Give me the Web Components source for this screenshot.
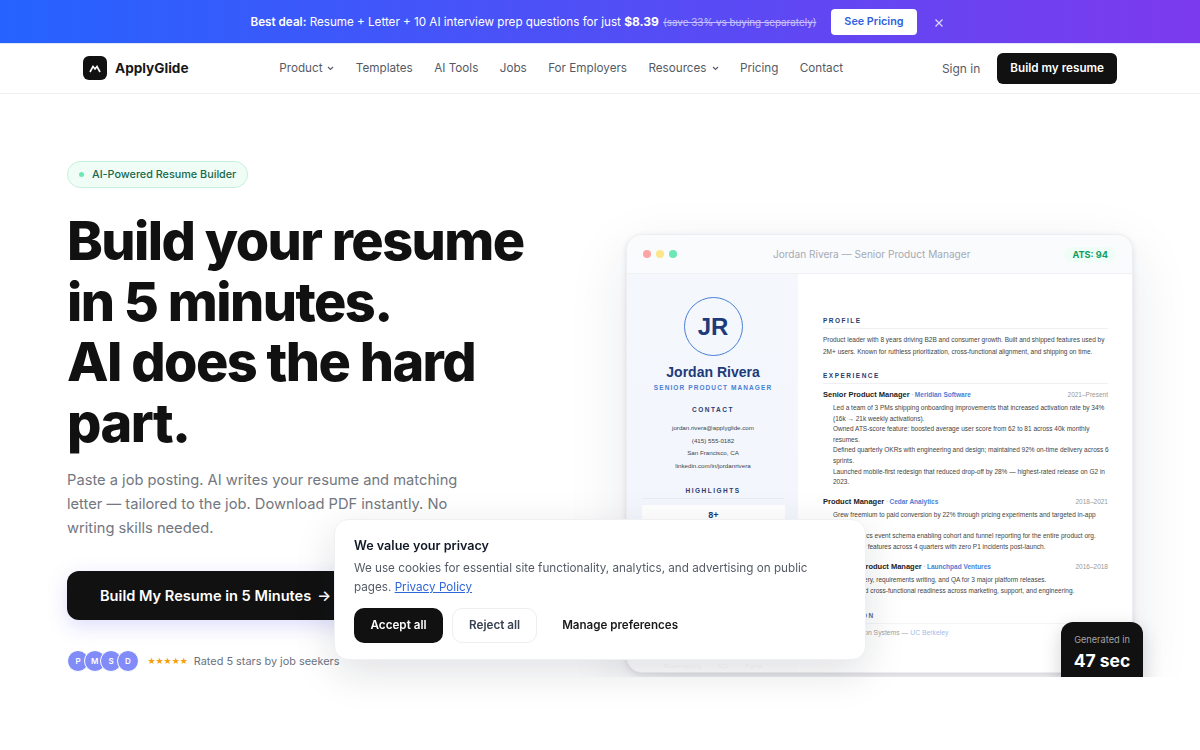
<!DOCTYPE html>
<html lang="en">
<head>
<meta charset="utf-8">
<title>ApplyGlide</title>
<style>
    html, body {
        margin: 0;
        background: #fff;
        font-family: Inter, "Liberation Sans", sans-serif;
        color: #111;
    }
</style>
</head>
<body>
<deal-banner></deal-banner>
<site-nav></site-nav>
<hero-section>
    <resume-card slot="preview"></resume-card>
</hero-section>
<cookie-box></cookie-box>

<script>
(function (){
    const define = (name, html) => {
        customElements.define(name, class extends HTMLElement {
            constructor() {
                super();
                this.attachShadow({ mode: "open" });
                this.shadowRoot.innerHTML = html;
            }
        });
    };

    define("deal-banner", `
    <style>
        :host {
            display: flex;
            align-items: center;
            justify-content: center;
            height: 44px;
            box-sizing: border-box;
            padding-right: 6px;
            background: linear-gradient(90deg, #2563ff 0%, #7c3aed 100%);
            background-clip: padding-box;
            color: #fff;
            font-size: 11.65px;
            border-bottom: 1px solid #dfe6f5;
        }
        b { font-weight: 600; font-size: 11.7px; }
        .price { font-size: 12px; font-weight: 700; }
        s { margin-left: 1px; font-size: 9.9px; opacity: .65; }
        a {
            display: block;
            margin-left: 15px;
            padding: 0 13px;
            line-height: 26px;
            background: #fff;
            border-radius: 4px;
            color: #2f5fe0;
            font-size: 10.8px;
            font-weight: 600;
        }
        svg { margin-left: 17px; margin-top: 2px; }
    </style>
    <span><b>Best deal:</b> Resume + Letter + 10 AI interview prep questions for just <span class="price">$8.39</span> <s>(save 33% vs buying separately)</s></span>
    <a>See Pricing</a>
    <svg width="10" height="10" viewBox="0 0 10 10" fill="none" stroke="#dcdcfa" stroke-width="1.2"><path d="M1.5 1.5l7 7M8.5 1.5l-7 7"/></svg>
    `);

    define("nav-link", `
    <style>
        :host {
            display: inline-flex;
            align-items: center;
            gap: 5px;
            color: #555b66;
            font-size: 11.7px;
        }
        ::slotted(svg) { margin-top: 1px; }
    </style>
    <slot></slot>
    `);

    const chevron = `<svg width="7" height="5" viewBox="0 0 7 5" fill="none" stroke="#555b66" stroke-width="1.1"><path d="M1 1l2.5 2.5L6 1"/></svg>`;

    define("site-nav", `
    <style>
        :host {
            display: flex;
            align-items: center;
            justify-content: space-between;
            height: 50px;
            box-sizing: border-box;
            padding: 0 83px 1px;
            background: #fff;
            border-bottom: 1px solid #f0f0f2;
        }
        .logo {
            display: flex;
            align-items: center;
            gap: 8px;
            font-size: 13.6px;
            font-weight: 700;
            color: #16171a;
        }
        .mark {
            display: flex;
            align-items: center;
            justify-content: center;
            width: 24px;
            height: 24px;
            background: #111;
            border-radius: 6px;
        }
        .links { display: flex; gap: 21.4px; margin: 0 7px 0 -1px; }
        .actions { display: flex; align-items: center; gap: 17px; }
        .sign { color: #555b66; font-size: 12px; }
        .cta {
            padding: 0 13px;
            line-height: 31px;
            background: #111;
            border-radius: 6px;
            color: #fff;
            font-size: 11.7px;
            font-weight: 600;
        }
    </style>
    <div class="logo">
        <span class="mark"><svg width="12" height="9" viewBox="0 0 12 9" fill="none" stroke="#fff" stroke-width="1.6"><path d="M1 8l3-5.5L6 5l2-2.5L11 8"/></svg></span>
        ApplyGlide
    </div>
    <div class="links">
        <nav-link>Product ${chevron}</nav-link>
        <nav-link>Templates</nav-link>
        <nav-link>AI Tools</nav-link>
        <nav-link>Jobs</nav-link>
        <nav-link>For Employers</nav-link>
        <nav-link>Resources ${chevron}</nav-link>
        <nav-link>Pricing</nav-link>
        <nav-link>Contact</nav-link>
    </div>
    <div class="actions">
        <span class="sign">Sign in</span>
        <span class="cta">Build my resume</span>
    </div>
    `);

    define("hero-section", `
    <style>
        :host {
            display: flex;
            justify-content: space-between;
            height: 583px;
            padding: 0 67px;
            overflow: hidden;
            background: #fff;
        }
        .copy { width: 480px; padding-top: 67px; }
        .pill {
            display: inline-flex;
            align-items: center;
            gap: 8px;
            height: 25px;
            padding: 0 11px;
            background: #f0fdf7;
            border: 1px solid #c6f0dc;
            border-radius: 14px;
            color: #17694c;
            font-size: 10.8px;
            font-weight: 500;
        }
        .dot { width: 5px; height: 5px; border-radius: 50%; background: #6ee7b7; }
        h1 {
            margin: 23px 0 0;
            font-size: 54px;
            line-height: 60.5px;
            font-weight: 800;
            letter-spacing: -1.55px;
            color: #111;
        }
        p {
            width: 400px;
            margin: 15px 0 0;
            color: #737780;
            font-size: 14.7px;
            line-height: 24px;
        }
        .go {
            display: inline-flex;
            align-items: center;
            gap: 6px;
            height: 49px;
            margin-top: 31px;
            padding: 0 33px;
            background: #111;
            border-radius: 12px;
            color: #fff;
            font-size: 14.6px;
            font-weight: 600;
            box-shadow: 0 6px 20px rgba(99, 102, 241, .22);
        }
        .proof {
            display: flex;
            align-items: center;
            margin-top: 30px;
            color: #6b7280;
            font-size: 10.9px;
        }
        .av {
            display: flex;
            align-items: center;
            justify-content: center;
            width: 20px;
            height: 20px;
            margin-right: -5.4px;
            background: #818cf8;
            border-radius: 50%;
            color: #fff;
            font-size: 8px;
            font-weight: 600;
            border: 1px solid #fff;
        }
        .stars { margin: 0 6px 0 14px; color: #f59e0b; font-size: 9px; font-family: "DejaVu Sans", sans-serif; }
        .preview { padding-top: 140px; position: relative; }
    </style>
    <div class="copy">
        <div class="pill"><span class="dot"></span>AI-Powered Resume Builder</div>
        <h1>Build your resume in 5 minutes.<br>AI does the hard part.</h1>
        <p>Paste a job posting. AI writes your resume and matching letter — tailored to the job. Download PDF instantly. No writing skills needed.</p>
        <div class="go">Build My Resume in 5 Minutes <span>→</span></div>
        <div class="proof">
            <span class="av">P</span><span class="av">M</span><span class="av">S</span><span class="av">D</span>
            <span class="stars">★★★★★</span>
            Rated 5 stars by job seekers
        </div>
    </div>
    <div class="preview"><slot name="preview"></slot></div>
    `);

    define("resume-section", `
    <style>
        :host { display: block; margin-top: 14px; }
        h4 {
            margin: 0 0 5px;
            padding-bottom: 3px;
            border-bottom: 1px solid #eef0f4;
            color: #2b3c72;
            font: 700 6.5px/9px "Liberation Sans", sans-serif;
            letter-spacing: 1.5px;
        }
    </style>
    <h4><slot name="title"></slot></h4>
    <slot></slot>
    `);

    define("resume-job", `
    <style>
        :host { display: block; margin-bottom: 8.5px; }
        .row { display: flex; align-items: baseline; font-size: 7.5px; line-height: 11px; }
        b { color: #222; }
        .co { color: #4a80d4; font-size: 6.5px; font-weight: 700; }
        .sep { color: #888; font-size: 6.5px; margin: 0 1.5px; }
        .when { margin-left: auto; color: #999; font-size: 6.5px; }
        .list { margin: 3px -2px 0 0; padding-left: 10px; color: #444; font-size: 6.5px; line-height: 10.6px; }
        ::slotted(div) { display: block; }
    </style>
    <div class="row"><b><slot name="role"></slot></b><span class="sep">·</span><span class="co"><slot name="company"></slot></span><span class="when"><slot name="when"></slot></span></div>
    <div class="list"><slot></slot></div>
    `);

    define("resume-card", `
    <style>
        :host {
            display: block;
            position: relative;
            width: 507px;
            font-family: "Liberation Sans", sans-serif;
        }
        .frame {
            height: 439px;
            overflow: hidden;
            position: relative;
            background: #fff;
            border: 1px solid #eceef2;
            border-radius: 16px;
            box-sizing: border-box;
            box-shadow: 0 2px 6px rgba(0, 0, 0, .1), 0 20px 60px rgba(30, 40, 90, .1);
        }
        .bar {
            display: flex;
            align-items: center;
            height: 39px;
            padding: 0 16px;
            box-sizing: border-box;
            background: #fafbfd;
            border-bottom: 1px solid #f0f1f4;
            font-family: Inter, sans-serif;
        }
        .bar i { width: 8px; height: 8px; margin-right: 5px; border-radius: 50%; }
        .bar .t { flex: 1; text-align: center; color: #a5aab3; font-size: 10.1px; padding-right: 3px; }
        .ats {
            padding: 2px 8px;
            background: #f0fdf6;
            border-radius: 8px;
            color: #0f9d63;
            font-size: 9.2px;
            font-weight: 700;
        }
        .body { display: flex; height: 400px; }
        aside {
            width: 171px;
            flex: none;
            padding: 23px 0 0 1px;
            box-sizing: border-box;
            background: linear-gradient(180deg, #f4f7fc, #f2f6fd);
            text-align: center;
        }
        .avatar {
            display: flex;
            align-items: center;
            justify-content: center;
            width: 57px;
            height: 57px;
            margin: 0 auto;
            border: 1.5px solid #4a80d4;
            border-radius: 50%;
            color: #1e3a7a;
            font-size: 24px;
            font-weight: 700;
        }
        .name { margin-top: 6px; color: #1e3a7a; font-size: 14px; font-weight: 700; line-height: 20px; }
        .title { margin-top: 1px; color: #4a80d4; font-size: 6.5px; font-weight: 700; letter-spacing: 1.1px; line-height: 9px; }
        .label { margin-top: 13px; color: #2b3c72; font-size: 6.5px; font-weight: 700; letter-spacing: 1.5px; line-height: 9px; }
        .lines { margin-top: 8px; color: #444; font-size: 6.2px; line-height: 12.5px; }
        .hl-label { margin: 14px 14px 0; padding-bottom: 3px; border-bottom: 1px solid #e8ebf1; }
        .stat { margin: 6px 13px 0 14px; padding: 3px 0 0; background: #fff; color: #1e3a7a; font-size: 9px; font-weight: 700; line-height: 15px; height: 34px; }
        .skills { display: flex; justify-content: center; gap: 16px; margin-top: 121px; color: #777; font-size: 6px; }
        main { flex: 1; padding: 42px 24px 0 25px; min-width: 0; }
        .summary { color: #444; font-size: 6.5px; line-height: 11.5px; }
        .school { margin-top: 5px; color: #444; font-size: 6.8px; }
        .school em { font-style: normal; color: #4a80d4; }
        .fade {
            position: absolute;
            left: 0;
            right: 0;
            bottom: 0;
            height: 70px;
            background: linear-gradient(180deg, rgba(255, 255, 255, 0), rgba(255, 255, 255, .92) 85%);
        }
        .badge {
            position: absolute;
            top: 388px;
            right: -10px;
            width: 82px;
            height: 70px;
            padding-top: 12px;
            box-sizing: border-box;
            background: #111;
            border-radius: 12px;
            text-align: center;
            font-family: Inter, sans-serif;
            color: #a3a3a3;
            font-size: 9.2px;
            box-shadow: 0 6px 20px rgba(0, 0, 0, .18);
        }
        .badge b { display: block; margin-top: 5px; color: #fff; font-size: 17.5px; font-weight: 700; }
    </style>
    <div class="frame">
        <div class="bar">
            <i style="background:#fca5a5"></i><i style="background:#fde68a"></i><i style="background:#6ee7b7"></i>
            <span class="t">Jordan Rivera — Senior Product Manager</span>
            <span class="ats">ATS: 94</span>
        </div>
        <div class="body">
            <aside>
                <div class="avatar">JR</div>
                <div class="name">Jordan Rivera</div>
                <div class="title">SENIOR PRODUCT MANAGER</div>
                <div class="label">CONTACT</div>
                <div class="lines">jordan.rivera@applyglide.com<br>(415) 555-0182<br>San Francisco, CA<br>linkedin.com/in/jordanrivera</div>
                <div class="label hl-label">HIGHLIGHTS</div>
                <div class="stat">8+</div>
                <div class="skills"><span>Roadmapping</span><span>SQL</span><span>Figma</span></div>
            </aside>
            <main>
                <resume-section style="margin-top:0">
                    <span slot="title">PROFILE</span>
                    <div class="summary">Product leader with 8 years driving B2B and consumer growth. Built and shipped features used by 2M+ users. Known for ruthless prioritization, cross-functional alignment, and shipping on time.</div>
                </resume-section>
                <resume-section>
                    <span slot="title">EXPERIENCE</span>
                    <resume-job>
                        <span slot="role">Senior Product Manager</span>
                        <span slot="company">Meridian Software</span>
                        <span slot="when">2021–Present</span>
                        <div>Led a team of 3 PMs shipping onboarding improvements that increased activation rate by 34% (16k → 21k weekly activations).</div>
                        <div>Owned ATS-score feature: boosted average user score from 62 to 81 across 40k monthly resumes.</div>
                        <div>Defined quarterly OKRs with engineering and design; maintained 92% on-time delivery across 6 sprints.</div>
                        <div>Launched mobile-first redesign that reduced drop-off by 28% — highest-rated release on G2 in 2023.</div>
                    </resume-job>
                    <resume-job>
                        <span slot="role">Product Manager</span>
                        <span slot="company">Cedar Analytics</span>
                        <span slot="when">2018–2021</span>
                        <div>Grew freemium to paid conversion by 22% through pricing experiments and targeted in-app prompts.</div>
                        <div>Built analytics event schema enabling cohort and funnel reporting for the entire product org.</div>
                        <div>Shipped 14 features across 4 quarters with zero P1 incidents post-launch.</div>
                    </resume-job>
                    <resume-job>
                        <span slot="role">Associate Product Manager</span>
                        <span slot="company">Launchpad Ventures</span>
                        <span slot="when">2016–2018</span>
                        <div>Led discovery, requirements writing, and QA for 3 major platform releases.</div>
                        <div>Coordinated cross-functional readiness across marketing, support, and engineering.</div>
                    </resume-job>
                </resume-section>
                <resume-section style="margin-top:15px">
                    <span slot="title">EDUCATION</span>
                    <div class="school">B.S. Information Systems — <em>UC Berkeley</em></div>
                </resume-section>
            </main>
        </div>
        <div class="fade"></div>
    </div>
    <div class="badge">Generated in<b>47 sec</b></div>
    `);

    define("cookie-box", `
    <style>
        :host {
            display: block;
            position: fixed;
            left: 334px;
            top: 519px;
            width: 532px;
            height: 141px;
            padding: 18px 19px 0;
            box-sizing: border-box;
            background: #fff;
            border: 1px solid #f0f0f2;
            border-radius: 14px;
            box-shadow: 0 12px 40px rgba(17, 24, 39, .13);
        }
        h3 { margin: 0; color: #111827; font-size: 12.6px; font-weight: 600; line-height: 16px; }
        p { margin: 5px 0 0; color: #555b66; font-size: 11.7px; line-height: 19px; }
        a { color: #2f66d8; text-decoration: underline; }
        .btns { display: flex; align-items: center; gap: 9px; margin-top: 11px; }
        .btns span { display: block; line-height: 35px; font-size: 11.7px; font-weight: 600; border-radius: 10px; }
        .yes { padding: 0 16.5px; background: #111; color: #fff; }
        .no { padding: 0 16px; border: 1px solid #eee; color: #374151; line-height: 33px !important; }
        .more { padding: 0 16px; color: #1a1a1a; font-size: 11.6px !important; }
    </style>
    <h3>We value your privacy</h3>
    <p>We use cookies for essential site functionality, analytics, and advertising on public pages. <a>Privacy Policy</a></p>
    <div class="btns">
        <span class="yes">Accept all</span>
        <span class="no">Reject all</span>
        <span class="more">Manage preferences</span>
    </div>
    `);
})();
</script>
</body>
</html>
